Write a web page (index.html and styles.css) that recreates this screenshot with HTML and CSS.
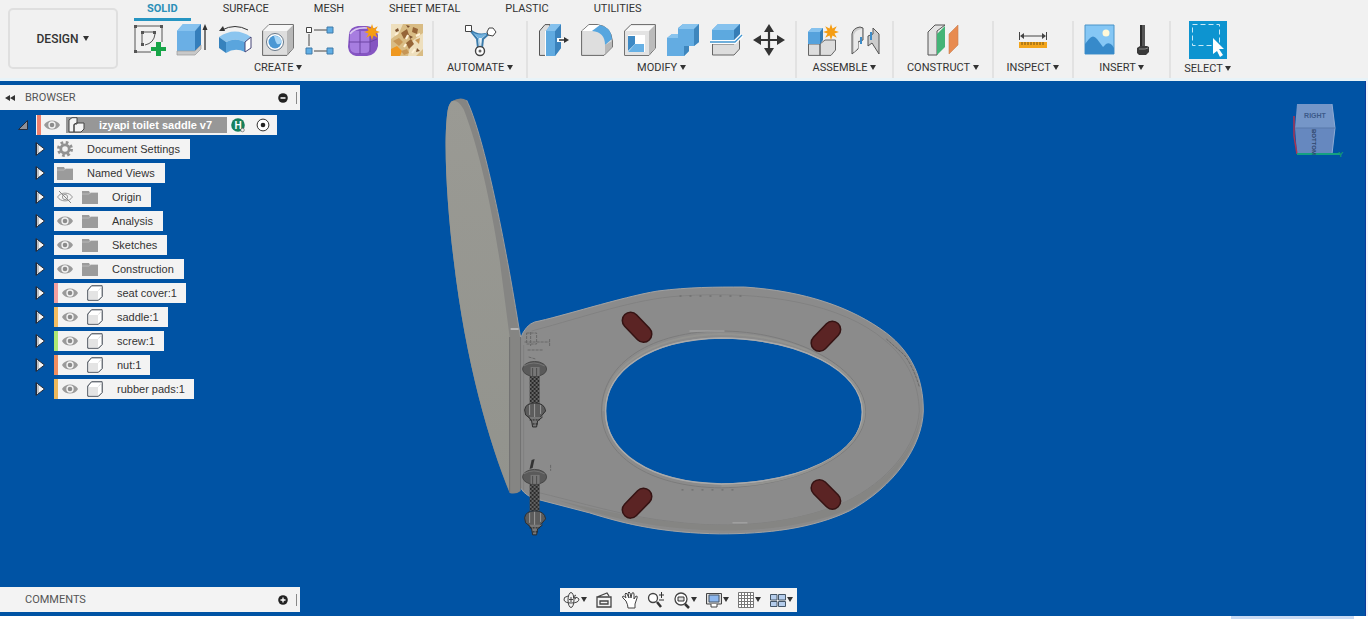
FILE: index.html
```html
<!DOCTYPE html>
<html lang="en">
<head>
<meta charset="utf-8">
<title>izyapi toilet saddle v7</title>
<link rel="stylesheet" href="styles.css">
</head>
<body>
<svg class="defs" aria-hidden="true">
  <symbol id="eye" viewBox="0 0 16 12"><path d="M0 6C3 0 13 0 16 6C13 12 3 12 0 6Z" fill="#9a9a9a"/><circle cx="8" cy="6" r="3.7" fill="#f3f3f3"/><circle cx="8" cy="6" r="2.3" fill="#8c8c8c"/></symbol>
  <symbol id="eye-off" viewBox="0 0 16 12"><path d="M.6 6C3.500 .8 12.500 .8 15.400 6C12.500 11.200 3.500 11.200 .6 6Z" fill="none" stroke="#999"/><circle cx="8" cy="6" r="2.600" fill="none" stroke="#999"/><path d="M2 0L14 12" stroke="#888"/></symbol>
  <symbol id="folder" viewBox="0 0 16 13"><path d="M0 0H7L8 2H16V13H0Z" fill="#9b9b9b"/><path d="M0 3H7L9 1.500H16" fill="none" stroke="#c4c4c4" stroke-width=".7"/></symbol>
  <symbol id="body" viewBox="0 0 16 16"><path d="M.8 5L4.500 .8H15.200V11.500L11.500 15.200H.8Z" fill="#fff" stroke="#333b46"/><path d="M1.500 6H11V14.500H1.500Z" fill="#e4e4e4"/><path d="M11.500 5.500L15 1.500" stroke="#ddd"/></symbol>
  <symbol id="closed" viewBox="0 0 10 14"><path d="M1 .5L9.500 7L1 13.500Z" fill="#f5f5f5" stroke="#252b38"/><path d="M1.500 1V13" stroke="#252b38"/><path d="M3 3V11" stroke="#8a9099"/></symbol>
  <symbol id="star" viewBox="0 0 16 16"><path d="M8 0L9.500 4.500L13.800 2.200L11.500 6.500L16 8L11.500 9.500L13.800 13.800L9.500 11.500L8 16L6.500 11.500L2.200 13.800L4.500 9.500L0 8L4.500 6.500L2.200 2.200L6.500 4.500Z" fill="#f59d13"/></symbol>
</svg>

<header class="ribbon">
  <button class="workspace">DESIGN <i class="caret"></i></button>
  <div class="ribbon-main">
    <nav class="tabs">
      <button class="tab active">SOLID</button><button class="tab">SURFACE</button><button class="tab">MESH</button><button class="tab">SHEET METAL</button><button class="tab">PLASTIC</button><button class="tab">UTILITIES</button>
    </nav>
    <div class="groups">
      <section class="group create">
        <div class="tools">
          <button class="tool" aria-label="Create sketch"><svg viewBox="0 0 32 32"><path d="M4 2H27M2 4V26M4 28H18M29 4V18M9 10V19M11 8H20M22 10Q21 19 12 21" fill="none" stroke="#555"/><path d="M1 1h3v3H1zM27 1h3v3h-3zM1 26h3v3H1zM8 7h3v3H8zM20 7h3v3h-3zM8 19h3v3H8z" fill="#555"/><path d="M23 18h5v5h5v4h-5v5h-5v-5h-5v-4h5z" fill="#17a548"/></svg></button>
          <button class="tool" aria-label="Extrude"><svg viewBox="0 0 32 32"><path d="M1 7L7 0H25L19 7V27H1Z" fill="#6aafe5"/><path d="M1 7L7 0H25L19 7Z" fill="#86c2ef"/><path d="M19 7L25 0V21L19 27Z" fill="#347ebb"/><path d="M1 27H19L25 21V25L19 31H1Z" fill="#c9c9c9" stroke="#999" stroke-width=".7"/><path d="M29 4V26" stroke="#333" stroke-width="1.300"/><path d="M26.500 6L29 0L31.500 6Z" fill="#333"/></svg></button>
          <button class="tool" aria-label="Revolve"><svg viewBox="0 0 32 32"><path d="M0 13Q16 2 32 13L26 18Q16 13 7 18Z" fill="#8bc5ef"/><path d="M0 13L7 18V29L0 24Z" fill="#3682bd"/><path d="M7 18Q16 13 26 18V28Q16 23 7 29Z" fill="#5aa5dd"/><path d="M26 18L32 13V24L26 28Z" fill="#fff" stroke="#447"/><path d="M3 6Q16-1 29 6" fill="none" stroke="#333"/><path d="M0 7L4 2L6 7Z" fill="#333"/></svg></button>
          <button class="tool" aria-label="Hole"><svg viewBox="0 0 32 32"><path d="M.6 7L7 .6H31.400V24L25 31.400H.6Z" fill="#ddd" stroke="#666"/><path d="M25 7L31 1V24L25 31Z" fill="#b8b8b8"/><path d="M1 7L7 1H31L25 7Z" fill="#f7f7f7"/><circle cx="13" cy="18" r="8.500" fill="#fff" stroke="#678"/><circle cx="13" cy="18" r="6.500" fill="#4b98d4"/><path d="M12 12Q19 11 19.500 18Q18 21 15 20Q13 17 12 12Z" fill="#a8d6f6"/></svg></button>
          <button class="tool" aria-label="Pattern"><svg viewBox="0 0 32 32"><path d="M9 6H22M4 10V22M9 27H22" stroke="#444"/><path d="M1.500 3.500h5v5h-5z" fill="#fff" stroke="#444"/><path d="M22 3h6v6h-6zM1 24h6v6H1zM22 24h6v6h-6z" fill="#60aee5" stroke="#407ba8"/></svg></button>
          <button class="tool" aria-label="Create form"><svg viewBox="0 0 32 32"><path d="M1 10Q2 3 10 2H19Q29 3 30 11V22Q28 31 19 32H8Q1 31 0 23Z" fill="#8555c2"/><path d="M2 11Q5 6 11 7H18Q22 8 22 12V23Q22 29 17 29H7Q2 28 2 23Z" fill="#a77de0"/><path d="M2 10Q7 3 19 4" fill="none" stroke="#d9c7f2" stroke-width="1.500"/><path d="M12 7V30M1 18H22L29 15M22 10V28" fill="none" stroke="#6d44a3"/><use href="#star" x="16" y="0" width="16" height="16"/></svg></button>
          <button class="tool" aria-label="Texture"><svg viewBox="0 0 32 32"><path d="M0 0H32V32H0Z" fill="#d9bc84"/><path d="M0 0H12L8 9L0 15ZM20 18L32 9V25L25 32H17Z" fill="#eedfbd"/><path d="M0 25L6 22L11 27L9 32H0Z" fill="#ef9820"/><path d="M10 9L16 5L18 11L13 15ZM15 19L20 15L23 20L18 25ZM22 3L27 5L26 10L21 8Z" fill="#966537"/><path d="M2 17L8 14L12 18L8 22ZM24 16L29 14L28 20ZM10 27L16 25L18 29L13 31Z" fill="#c79655"/><path d="M4 6l3-2 1 3-3 1zM15 1l4 1-2 2zM26 24l3 3-4 1zM18 11l4 2-3 2zM7 11l3 2" fill="#7d5330"/><path d="M4 11l3-2M13 23l2-3M25 12l4-2M21 29l3-4M15 15l2-4" stroke="#fff2d8" stroke-width="2"/></svg></button>
        </div>
        <button class="label">CREATE <i class="caret"></i></button>
      </section>
      <section class="group narrow">
        <div class="tools"><button class="tool" aria-label="Automate"><svg viewBox="0 0 32 32"><path d="M5 5L13 15L14 24H18L19 15L28 7M5 5Q16 15 28 7" fill="none" stroke="#397aaa" stroke-width="2"/><path d="M8 8Q16 13 25 8L18 14L16 23L14 14Z" fill="#71b2df"/><path d="M15 14H18L16 23Z" fill="#e8f2f8"/><path d="M1.500 1.500h6v6h-6z" fill="#fff" stroke="#444"/><path d="M25 4L29 4L32 8L29 12L24 11L23 8Z" fill="#fff" stroke="#444"/><circle cx="16" cy="27" r="4.500" fill="#fff" stroke="#444" stroke-width="1.400"/><circle cx="16" cy="27" r="1.500" fill="#666"/></svg></button></div>
        <button class="label">AUTOMATE <i class="caret"></i></button>
      </section>
      <section class="group">
        <div class="tools">
          <button class="tool" aria-label="Press pull"><svg viewBox="0 0 32 32"><path d="M1.500 7L7 .6H12L9 31.400H1.500Z" fill="#ddd" stroke="#555"/><path d="M8 7L13 0H23V24L17 32H8Z" fill="#60aae0"/><path d="M17 7L23 0V24L17 32Z" fill="#3b83bd"/><path d="M8 7L13 0H23L17 7Z" fill="#85c1ed"/><path d="M7.500 7V32" stroke="#fff"/><path d="M19 16H27" stroke="#fff" stroke-width="4"/><path d="M21 16H27" stroke="#333" stroke-width="1.500"/><path d="M26 13L31 16L26 19Z" fill="#333"/></svg></button>
          <button class="tool" aria-label="Fillet"><svg viewBox="0 0 32 32"><path d="M.6 7L8 .6H16Q30 2 31.400 17V23L23 31.400H.6Z" fill="#dedede" stroke="#666"/><path d="M1 7L8 1H19L11 7Z" fill="#fff"/><path d="M11 7L19 1Q30 3 31 15L24 21Q24 8 11 7Z" fill="#57a6df"/><path d="M24 21L31 17V23L24 30Z" fill="#b8b8b8"/></svg></button>
          <button class="tool" aria-label="Shell"><svg viewBox="0 0 32 32"><path d="M.6 7L7 .6H31.400V24L25 31.400H.6Z" fill="#f8f8f8" stroke="#666"/><path d="M25 7L31 1V24L25 31Z" fill="#bbb"/><path d="M1 7H25V31H1Z" fill="#e3e3e3"/><path d="M4 11H21V28H4Z" fill="#fff"/><path d="M4 12L11 12V20L4 27Z" fill="#3d89c4"/><path d="M4 28L11 20H20V28Z" fill="#68b1e5"/></svg></button>
          <button class="tool" aria-label="Combine"><svg viewBox="0 0 32 32"><path d="M0 14L5 10H11V4L16 0H32V18L27 22H22V27L17 32H0Z" fill="#63ace2"/><path d="M11 5L16 0H32L27 5ZM0 14L5 10H11V14Z" fill="#89c4ee"/><path d="M27 5L32 0V18L27 22ZM17 22H22V27L17 32Z" fill="#3e86bd"/></svg></button>
          <button class="tool" aria-label="Split"><svg viewBox="0 0 32 32"><path d="M2 6L8 0H30V11L24 17H2Z" fill="#5da9df"/><path d="M2 6L8 0H30L24 6Z" fill="#86c2ee"/><path d="M24 6L30 0V11L24 17Z" fill="#367db6"/><path d="M2.500 20H24L29.500 15V25L24 31H2.500Z" fill="#ddd" stroke="#666"/><path d="M0 18H25L32 11" fill="none" stroke="#fff" stroke-width="4"/><path d="M0 18H25L32 11" fill="none" stroke="#4095d0" stroke-width="1.300"/></svg></button>
          <button class="tool" aria-label="Move"><svg viewBox="0 0 32 32"><path d="M16 5V27M5 16H27" stroke="#333" stroke-width="2.200"/><path d="M16 0L21 8H11ZM16 32L11 24H21ZM0 16L8 11V21ZM32 16L24 21V11Z" fill="#333"/></svg></button>
        </div>
        <button class="label">MODIFY <i class="caret"></i></button>
      </section>
      <section class="group">
        <div class="tools">
          <button class="tool" aria-label="New component"><svg viewBox="0 0 32 32"><path d="M1.500 20H13V31.400H1.500ZM13 20L18 16H28.500V26L24 31.400H13Z" fill="#ddd" stroke="#666"/><path d="M1 8L5 4H16V15L13 20H1Z" fill="#56a2dc"/><path d="M1 8L5 4H16L13 8Z" fill="#86c2ee"/><path d="M13 8L16 4V16L13 20Z" fill="#367db6"/><use href="#star" x="16" y="0" width="16" height="16"/></svg></button>
          <button class="tool" aria-label="Joint"><svg viewBox="0 0 32 32"><path d="M2 10Q3 4 10 3L13 4V16L8 18V25L2 30Z" fill="#ccc" stroke="#555"/><path d="M4 11Q5 6 12 5V15L8 17V24L4 28Z" fill="#eaeaea"/><path d="M29 10L23 4V10L18 12V22L22 19L29 30Z" fill="#ccc" stroke="#555"/><path d="M21 8V16M11 13V20" stroke="#3e8cc7" stroke-width="2"/></svg></button>
        </div>
        <button class="label">ASSEMBLE <i class="caret"></i></button>
      </section>
      <section class="group narrow">
        <div class="tools"><button class="tool" aria-label="Offset plane"><svg viewBox="0 0 32 32"><path d="M1 8L8 1H18L10 7V31H1Z" fill="#e3e3e3" stroke="#555"/><path d="M10 10L18 2V23L10 31Z" fill="#43b477"/><path d="M22 10L31 1V21L22 30Z" fill="#e88b50" stroke="#c78255" stroke-width=".6"/></svg></button></div>
        <button class="label">CONSTRUCT <i class="caret"></i></button>
      </section>
      <section class="group narrow">
        <div class="tools"><button class="tool" aria-label="Measure"><svg viewBox="0 0 32 32"><path d="M2.500 8V16M29.500 8V16M5 12H27" stroke="#444"/><path d="M3 12L7 9V15ZM29 12L25 15V9Z" fill="#444"/><path d="M2 18H30V24H2Z" fill="#f3a51b"/><path d="M5 18v3M8 18v3M11 18v3M14 18v3M17 18v3M20 18v3M23 18v3M26 18v3" stroke="#775513"/></svg></button></div>
        <button class="label">INSPECT <i class="caret"></i></button>
      </section>
      <section class="group">
        <div class="tools">
          <button class="tool" aria-label="Insert image"><svg viewBox="0 0 32 32"><path d="M1 1H30V30H1Z" fill="#85c7f5" stroke="#4b94c8"/><circle cx="22" cy="9" r="3.500" fill="#fff9d9"/><path d="M1 20L5 15Q9 10 13 15L19 23L22 20Q25 18 28 21L30 24V30H1Z" fill="#378aca"/></svg></button>
          <button class="tool" aria-label="Insert fastener"><svg viewBox="0 0 32 32"><path d="M13 1H18V23H13Z" fill="#555"/><path d="M14 1V23" stroke="#2b2b2b" stroke-width="2"/><path d="M10 24L13 22H20L22 23V28L19 31H12L10 29Z" fill="#3a3a3a"/><path d="M12 25H18L21 24" stroke="#888" fill="none"/></svg></button>
        </div>
        <button class="label">INSERT <i class="caret"></i></button>
      </section>
      <section class="group narrow">
        <div class="tools"><button class="tool selected" aria-label="Select"><svg viewBox="0 0 38 38"><path d="M3.500 3.500H30.500V24.500H3.500Z" fill="none" stroke="#c9eaf8" stroke-dasharray="5 3"/><path d="M24 17L35 28H30L34 34L31 36L28 30L24 33Z" fill="#fff"/></svg></button></div>
        <button class="label">SELECT <i class="caret"></i></button>
      </section>
    </div>
  </div>
</header>

<main class="viewport">
  <svg class="model" viewBox="0 81 1366 535" preserveAspectRatio="xMidYMid meet" role="img" aria-label="Toilet seat model">
    <defs>
      <linearGradient id="lid" x1="0" y1="0" x2="0" y2="1"><stop offset="0" stop-color="#9a9a94"/><stop offset="1" stop-color="#92938d"/></linearGradient>
      <pattern id="thread" width="4" height="4" patternUnits="userSpaceOnUse"><path d="M0 0H4V4H0Z" fill="#292929"/><path d="M0 1H2M2 3H4" stroke="#a0a0a0"/></pattern>
      <g id="bolt">
        <path d="M530 373H540V403H530Z" fill="url(#thread)"/>
        <ellipse cx="535" cy="369" rx="12" ry="7.500" fill="#5a5a5a" stroke="#474747"/>
        <path d="M524 366Q534 360 545 366" stroke="#737373" fill="none"/>
        <path d="M531 367H540V376H531Z" fill="#777"/><path d="M533 368V377M537 368V377" stroke="#4c4c4c"/>
        <path d="M525 410Q526 403 535 403Q545 403 546 411L541 417L536 421L530 418L526 415Z" fill="#5c5c5c" stroke="#303030"/>
        <path d="M530 405V415M535 404V418M541 405V414" stroke="#999"/>
        <path d="M529 417L532 421L533 427H537L538 421L543 417" fill="#777" stroke="#2b2b2b"/>
        <path d="M530 420H540M533 424H538" stroke="#222" stroke-dasharray="2 1"/>
      </g>
    </defs>
    <path fill-rule="evenodd" d="M521 338Q526 325 535 322C560 317 622 297 658 291C690 287 715 287 745 287C805 291 852 307 887 333C913 353 924 379 924 411C923 446 895 487 850 511C812 529 767 534 720 534C665 533 628 525 590 513L540 500Q526 497 521 488ZM606 411C606 371 650 339 722 338C800 339 863 370 863 412C863 455 800 483 722 484C650 483 606 452 606 411Z" fill="#8b8b8b" stroke="#a3a3a3"/>
    <path d="M532 331C588 316 635 299 680 296C765 290 843 304 885 340C910 360 919 385 920 411C918 446 888 482 846 502C794 525 730 529 675 522C626 517 583 503 532 491" fill="none" stroke="#828282"/>
    <path d="M846 502C891 481 918 446 922 411C921 446 893 486 850 509C780 538 680 537 590 511L558 500C685 532 768 534 846 502Z" fill="#858583"/>
    <path d="M606 411C606 371 650 339 722 338C800 339 863 370 863 412C863 455 800 483 722 484C650 483 606 452 606 411Z" fill="none" stroke="#aaa" stroke-width="1.500"/>
    <path d="M602 411C602 367 645 333 718 331C797 330 867 369 866 412C866 455 800 486 722 488C648 487 602 455 602 411Z" fill="none" stroke="#7b7b7b"/>
    <path d="M604 411C604 370 647 336 720 334C798 334 864 369 865 412C864 453 800 486 722 486" fill="none" stroke="#939390" stroke-width="2"/>
    <path d="M690 331H725M733 523H748" stroke="#aaa"/>
    <path d="M680 296H750M682 490H735" stroke="#666" stroke-dasharray="2 8"/>
    <path d="M887 339L905 355Q914 367 920 387" fill="none" stroke="#666" stroke-dasharray="3 1"/>
    <path d="M452 101Q461 96 467 100C483 133 503 227 519 326L521 337V491Q516 495 510 493C490 444 466 363 454 260C448 212 443 144 448 110Q449 104 452 101Z" fill="#858583"/>
    <path d="M452 101Q458 99 464 109C480 150 492 208 500 260L510 337V492C490 444 466 363 454 260C448 212 443 144 448 110Q449 104 452 101Z" fill="url(#lid)"/>
    <path d="M510 337V492M521 335V489" stroke="#6f6f6f"/>
    <path d="M467 100C483 133 503 227 519 326L521 337" fill="none" stroke="#9c9c9c"/>
    <path d="M511 329H519" stroke="#b5b5b5" stroke-width="2"/><path d="M524 345V490" stroke="#7f7f7f"/>
    <path d="M527 333H537V344H527ZM531 332V346M525 342H550M550 339V346M529 357L536 359M551 465V471M528 350H543" fill="none" stroke="#686868" stroke-dasharray="3 1"/>
    <path d="M530 469L532 460L535 459L533 468Z" fill="#333"/>
    <use href="#bolt"/><use href="#bolt" y="108"/>
    <path d="M631 320.500L644 334M833 329.500L820 343M644 496.500L631 510M820 488L833 501" stroke="#351313" stroke-width="18" stroke-linecap="round"/>
    <path d="M631 320.500L644 334M833 329.500L820 343M644 496.500L631 510M820 488L833 501" stroke="#5b2424" stroke-width="15" stroke-linecap="round"/>
  </svg>
  <svg class="viewcube" viewBox="0 0 56 60" role="img" aria-label="View cube">
    <path d="M7 3H42L45 27H5Z" fill="#7596c8"/><path d="M5 27H45L42 53H7Z" fill="#6688bf"/><path d="M42 3L45 27L42 53" fill="none" stroke="#8fabd3"/><path d="M5 27H45" stroke="#5878ab"/>
    <path d="M4 15V35L7 53" fill="none" stroke="#ad3450" stroke-width="1.500"/><path d="M7 53H50" stroke="#14a080" stroke-width="2"/>
    <text x="25" y="17" text-anchor="middle" class="face">RIGHT</text><text transform="translate(22 28) rotate(90)" class="face side">BOTTOM</text><text x="48" y="56" class="axis">Y</text>
  </svg>

  <aside class="browser">
    <div class="panel-head"><svg class="rewind" viewBox="0 0 10 8"><path d="M5 1V7L0 4ZM10 1V7L5 4Z" fill="#333"/></svg><span>BROWSER</span><button class="round" aria-label="Collapse browser"><svg viewBox="0 0 10 10"><circle cx="5" cy="5" r="4.800" fill="#222"/><path d="M2.500 5H7.500" stroke="#fff" stroke-width="1.500"/></svg></button></div>
    <ul class="tree">
      <li class="root"><button class="twist" aria-label="Collapse"><svg viewBox="0 0 10 10"><path d="M9.500 .5V9.500H.5Z" fill="#8c9099" stroke="#222b3b"/></svg></button>
        <div class="node"><i class="bar coral"></i><svg class="eye"><use href="#eye"/></svg><span class="title"><svg class="parts" viewBox="0 0 18 16"><path d="M1 15V3L4 .7H9V7H6V15ZM6 8L8 6H16V12L13 15H6Z" fill="#f5f5f5" stroke="#444"/></svg><b>izyapi toilet saddle v7</b></span><svg class="badge" viewBox="0 0 14 14"><circle cx="7" cy="7" r="6.800" fill="#15805d"/><text x="7" y="10.500" text-anchor="middle">H</text><circle cx="11.500" cy="12" r="1.800" fill="#eee" stroke="#555" stroke-width=".6"/></svg><svg class="target" viewBox="0 0 14 14"><circle cx="7" cy="7" r="5.900" fill="#fff" stroke="#333"/><circle cx="7" cy="7" r="2.300" fill="#222"/></svg></div></li>
      <li><button class="twist" aria-label="Expand"><svg><use href="#closed"/></svg></button><div class="node"><svg class="gear" viewBox="0 0 16 16"><circle cx="8" cy="8" r="6.500" fill="none" stroke="#929292" stroke-width="3" stroke-dasharray="2.600 2.500"/><circle cx="8" cy="8" r="4.200" fill="none" stroke="#929292" stroke-width="2.800"/></svg><span>Document Settings</span></div></li>
      <li><button class="twist" aria-label="Expand"><svg><use href="#closed"/></svg></button><div class="node"><svg class="folder"><use href="#folder"/></svg><span>Named Views</span></div></li>
      <li><button class="twist" aria-label="Expand"><svg><use href="#closed"/></svg></button><div class="node"><svg class="eye"><use href="#eye-off"/></svg><svg class="folder"><use href="#folder"/></svg><span>Origin</span></div></li>
      <li><button class="twist" aria-label="Expand"><svg><use href="#closed"/></svg></button><div class="node"><svg class="eye"><use href="#eye"/></svg><svg class="folder"><use href="#folder"/></svg><span>Analysis</span></div></li>
      <li><button class="twist" aria-label="Expand"><svg><use href="#closed"/></svg></button><div class="node"><svg class="eye"><use href="#eye"/></svg><svg class="folder"><use href="#folder"/></svg><span>Sketches</span></div></li>
      <li><button class="twist" aria-label="Expand"><svg><use href="#closed"/></svg></button><div class="node"><svg class="eye"><use href="#eye"/></svg><svg class="folder"><use href="#folder"/></svg><span>Construction</span></div></li>
      <li><button class="twist" aria-label="Expand"><svg><use href="#closed"/></svg></button><div class="node part"><i class="bar pink"></i><svg class="eye"><use href="#eye"/></svg><svg class="body"><use href="#body"/></svg><span>seat cover:1</span></div></li>
      <li><button class="twist" aria-label="Expand"><svg><use href="#closed"/></svg></button><div class="node part"><i class="bar amber"></i><svg class="eye"><use href="#eye"/></svg><svg class="body"><use href="#body"/></svg><span>saddle:1</span></div></li>
      <li><button class="twist" aria-label="Expand"><svg><use href="#closed"/></svg></button><div class="node part"><i class="bar green"></i><svg class="eye"><use href="#eye"/></svg><svg class="body"><use href="#body"/></svg><span>screw:1</span></div></li>
      <li><button class="twist" aria-label="Expand"><svg><use href="#closed"/></svg></button><div class="node part"><i class="bar orange"></i><svg class="eye"><use href="#eye"/></svg><svg class="body"><use href="#body"/></svg><span>nut:1</span></div></li>
      <li><button class="twist" aria-label="Expand"><svg><use href="#closed"/></svg></button><div class="node part"><i class="bar gold"></i><svg class="eye"><use href="#eye"/></svg><svg class="body"><use href="#body"/></svg><span>rubber pads:1</span></div></li>
    </ul>
  </aside>

  <div class="dock">
    <div class="panel-head comments"><span>COMMENTS</span><button class="round" aria-label="Add comment"><svg viewBox="0 0 10 10"><circle cx="5" cy="5" r="4.800" fill="#222"/><path d="M2.500 5H7.500M5 2.500V7.500" stroke="#fff" stroke-width="1.300"/></svg></button></div>
    <nav class="navbar">
      <button aria-label="Orbit"><svg viewBox="0 0 18 18"><ellipse cx="8" cy="9" rx="3" ry="7.500" fill="none" stroke="#444"/><path d="M5 5Q0 6 1 9Q2 12 8 12Q16 12 16 8Q15 6 10 6M13 4L10 6L13 8M8 6V11M6 8.500H10" fill="none" stroke="#444"/></svg><i class="caret"></i></button>
      <button aria-label="Look at"><svg viewBox="0 0 18 18"><path d="M2 6H16V16H2ZM5 10H13V13H5ZM2 6L12 2L14 5" fill="none" stroke="#444" stroke-width="1.300"/></svg></button>
      <button aria-label="Pan"><svg viewBox="0 0 18 18"><path d="M5 10L2 7Q1 6 2 5Q3 5 5 7L4 3Q5 1 6 3L8 7L7 2Q8 0 9 2L10 7L11 2Q13 1 13 3L13 8L15 5Q17 5 16 7L14 13V17H7Q7 14 5 10Z" fill="#fff" stroke="#444"/></svg></button>
      <button aria-label="Zoom"><svg viewBox="0 0 18 18"><circle cx="6" cy="7" r="4.500" fill="#fff" stroke="#444" stroke-width="1.300"/><path d="M10 11L14 16" stroke="#333" stroke-width="2.500"/><path d="M12 4H17M14.500 1V7M12 9H17" stroke="#333"/></svg></button>
      <button aria-label="Fit"><svg viewBox="0 0 18 18"><circle cx="8" cy="8" r="6" fill="#fff" stroke="#444" stroke-width="1.300"/><path d="M5 6H11V10H5Z" fill="#ddd" stroke="#333"/><path d="M12 13L16 17" stroke="#333" stroke-width="2.500"/></svg><i class="caret"></i></button>
      <button aria-label="Display settings"><svg viewBox="0 0 18 18"><path d="M1.500 2.500H16.500V13H1.500Z" fill="#ddd" stroke="#444"/><path d="M4 4H14V11H4Z" fill="#8cb6ed" stroke="#456"/><path d="M6 13V16H12V13" fill="#fff" stroke="#444"/></svg><i class="caret"></i></button>
      <button aria-label="Grid settings"><svg viewBox="0 0 18 18"><path d="M1.500 1.500H16.500V16.500H1.500ZM4.500 1V17M7.500 1V17M10.500 1V17M13.500 1V17M1 4.500H17M1 7.500H17M1 10.500H17M1 13.500H17" fill="#fff" stroke="#777"/></svg><i class="caret"></i></button>
      <button aria-label="Viewports"><svg viewBox="0 0 18 18"><path d="M1.500 3.500H8V9H1.500ZM9.500 3.500H16.500V9H9.500ZM1.500 10.500H8V15.500H1.500ZM9.500 10.500H16.500V15.500H9.500Z" fill="#b5cdec" stroke="#456"/></svg><i class="caret"></i></button>
    </nav>
  </div>
</main>
<footer class="edge"></footer>
</body>
</html>
```
FILE: styles.css
```css
* { box-sizing: border-box; }
body { margin: 0; min-height: 100vh; display: flex; flex-direction: column; background: #f2f5f8; font-family: Roboto, "Liberation Sans", sans-serif; color: #333; }
button { margin: 0; padding: 0; border: 0; background: none; font: inherit; color: inherit; }
svg { display: block; flex: none; overflow: visible; }
.defs { position: absolute; width: 0; height: 0; }
.caret { display: inline-block; border: 3px solid transparent; border-top: 5px solid currentColor; border-bottom: 0; vertical-align: middle; margin-bottom: 2px; }

.ribbon { display: flex; background: #f1f1f1; border-bottom: 3px solid #e8f3f8; }
.workspace { width: 110px; height: 61px; margin: 8px 8px 0 8px; border: 2px solid #dfdfdf; border-radius: 5px; font-size: 12px; font-weight: 500; }
.workspace .caret { margin-left: 2px; }
.ribbon-main { flex: 1; display: flex; flex-direction: column; }
.tabs { display: flex; gap: 19px; padding-left: 8px; height: 21px; }
.tab { padding: 2px 13px 3px; font-size: 11px; line-height: 13px; white-space: nowrap; border-bottom: 3px solid transparent; }
.tab.active { color: #2b8fb8; font-weight: 700; border-bottom-color: #2695c2; }
.groups { display: flex; }
.group { display: flex; flex-direction: column; align-items: center; padding: 0 10px; height: 57px; border-right: 2px solid #e2e2e2; }
.group.create { padding: 0 9px 0 7px; }
.group.narrow { padding: 0 13px; }
.group:last-child { border-right: 0; }
.tools { display: flex; gap: 11px; height: 38px; align-items: center; }
.tool { width: 32px; height: 32px; }
.tool svg { width: 100%; height: 100%; }
.tool.selected { width: 38px; height: 38px; background: #0d94d0; }
.label { font-size: 11px; line-height: 20px; white-space: nowrap; }

.viewport { position: relative; flex: 1; display: flex; flex-direction: column; justify-content: space-between; margin-right: 2px; padding: 4px 0; background: #0053a4; border-right: 1px solid #0b3b98; overflow: hidden; }
.model { position: absolute; inset: 0; width: 100%; height: 100%; }
.viewcube { position: absolute; top: 20px; right: 19px; width: 56px; height: 60px; }
.face { font: 700 7px "Liberation Sans", sans-serif; fill: #3c5a8a; }
.face.side { font-size: 6px; fill: #2e4569; }
.axis { font: 700 8px "Liberation Sans", sans-serif; fill: #149a70; }
.browser, .dock { position: relative; }
.panel-head { display: flex; align-items: center; width: 300px; height: 25px; padding-right: 11px; background: #f3f3f3; font-size: 11px; color: #555; }
.panel-head .rewind { width: 10px; height: 8px; margin: 0 10px 0 5px; }
.panel-head.comments { padding-left: 25px; }
.panel-head .round { width: 10px; height: 10px; margin-left: auto; }
.panel-head .round svg { width: 10px; height: 10px; }
.panel-head::after { content: ""; width: 1px; height: 12px; margin: 0 -8px 0 8px; background: #888; }
.tree { list-style: none; margin: 5px 0 0; padding: 0; font: 11px/20px "Liberation Sans", Arial, sans-serif; }
.tree li { display: flex; align-items: center; height: 20px; margin-bottom: 4px; padding-left: 35px; }
.tree .root { padding-left: 18px; }
.twist, .twist svg { width: 10px; height: 14px; }
.twist { margin-right: 9px; }
.root .twist { margin-right: 8px; }
.node { display: flex; align-items: center; height: 20px; padding: 0 10px 0 3px; background: #f3f3f3; color: #333; white-space: nowrap; }
.node span { margin-left: 14px; }
.eye { width: 16px; height: 12px; }
.folder { width: 16px; height: 13px; }
.gear { width: 16px; height: 16px; }
.body { width: 16px; height: 16px; margin-left: 9px; }
.eye + .folder { margin-left: 9px; }
.bar { width: 4px; height: 20px; margin-right: 4px; }
.part { padding: 0 9px 0 0; }
.root .node { padding: 0 7px 0 1px; }
.root .title { display: flex; align-items: center; margin-left: 6px; background: #979797; color: #fff; height: 16px; padding: 0 15px 0 2px; }
.parts { width: 18px; height: 16px; margin-right: 13px; }
.coral { background: #ef806d; } .pink { background: #f3a0a0; } .amber { background: #f4bd62; } .green { background: #aee975; } .orange { background: #f18e60; } .gold { background: #edb85c; }
.root .bar { margin-right: 3px; }
.badge { width: 14px; height: 14px; margin-left: 4px; font: 700 10px "Liberation Sans", sans-serif; }
.badge text { fill: #fff; }
.target { width: 14px; height: 14px; margin-left: 11px; }
.dock { display: grid; grid-template-columns: 1fr auto 1fr; align-items: center; padding-right: 9px; }
.navbar { display: flex; align-items: center; gap: 8px; height: 24px; padding: 0 4px 0 3px; background: #f3f3f3; }
.navbar button { display: flex; align-items: center; }
.navbar svg { width: 18px; height: 18px; }
.navbar .caret { margin-bottom: 0; }
.edge { height: 3px; background: linear-gradient(90deg, #fff 0 90%, #c7daf4 90% 99%, #fff 99%); }
```
